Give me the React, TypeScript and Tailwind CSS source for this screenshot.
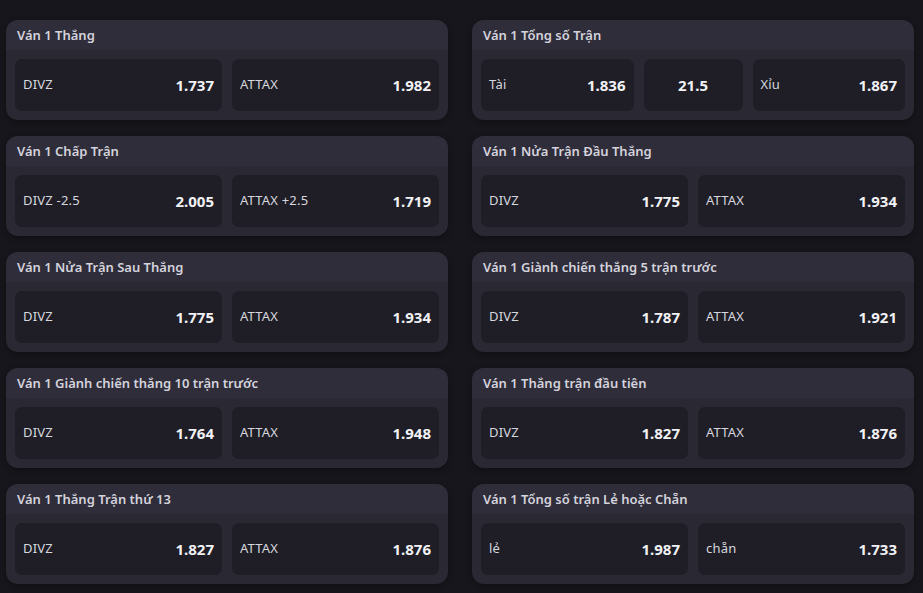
type Cell = { label?: string; odds: string };
type Market = { title: string; cells: Cell[] };

const left: Market[] = [
  { title: 'Ván 1 Thắng', cells: [{ label: 'DIVZ', odds: '1.737' }, { label: 'ATTAX', odds: '1.982' }] },
  { title: 'Ván 1 Chấp Trận', cells: [{ label: 'DIVZ -2.5', odds: '2.005' }, { label: 'ATTAX +2.5', odds: '1.719' }] },
  { title: 'Ván 1 Nửa Trận Sau Thắng', cells: [{ label: 'DIVZ', odds: '1.775' }, { label: 'ATTAX', odds: '1.934' }] },
  { title: 'Ván 1 Giành chiến thắng 10 trận trước', cells: [{ label: 'DIVZ', odds: '1.764' }, { label: 'ATTAX', odds: '1.948' }] },
  { title: 'Ván 1 Thắng Trận thứ 13', cells: [{ label: 'DIVZ', odds: '1.827' }, { label: 'ATTAX', odds: '1.876' }] },
];

const right: Market[] = [
  { title: 'Ván 1 Tổng số Trận', cells: [{ label: 'Tài', odds: '1.836' }, { odds: '21.5' }, { label: 'Xỉu', odds: '1.867' }] },
  { title: 'Ván 1 Nửa Trận Đầu Thắng', cells: [{ label: 'DIVZ', odds: '1.775' }, { label: 'ATTAX', odds: '1.934' }] },
  { title: 'Ván 1 Giành chiến thắng 5 trận trước', cells: [{ label: 'DIVZ', odds: '1.787' }, { label: 'ATTAX', odds: '1.921' }] },
  { title: 'Ván 1 Thắng trận đầu tiên', cells: [{ label: 'DIVZ', odds: '1.827' }, { label: 'ATTAX', odds: '1.876' }] },
  { title: 'Ván 1 Tổng số trận Lẻ hoặc Chẵn', cells: [{ label: 'lẻ', odds: '1.987' }, { label: 'chẵn', odds: '1.733' }] },
];

const MarketCard = ({ market }: { market: Market }) => {
  const three = market.cells.length === 3;
  return (
    <div className="rounded-[12px] bg-[#292833] overflow-hidden shadow-[0_2px_6px_rgba(0,0,0,0.35)]">
      <div className="h-[30px] flex items-center pt-[2px] px-[11px] bg-[#2f2d3a] text-[13px] font-semibold text-[#d4d3dc]">
        {market.title}
      </div>
      <div className={`p-[9px] grid gap-[10px] ${three ? 'grid-cols-[1fr_99px_1fr]' : 'grid-cols-2'}`}>
        {market.cells.map((c, i) => (
          <div
            key={i}
            className={`h-[52px] rounded-[7px] bg-[#1f1e26] flex items-center px-[8px] ${c.label ? 'justify-between' : 'justify-center'}`}
          >
            {c.label && <span className="text-[13px] tracking-[0.2px] text-[#d6d6de]">{c.label}</span>}
            <span className="text-[15px] font-bold text-[#f2f2f6]">{c.odds}</span>
          </div>
        ))}
      </div>
    </div>
  );
};

export default function App() {
  return (
    <div
      className="min-h-screen w-[923px] h-[593px] overflow-hidden bg-[#17161c] pt-[20px] pl-[6px] pr-[9px]"
      style={{ fontFamily: '"Noto Sans", Inter, sans-serif' }}
    >
      <div className="grid grid-cols-2 gap-x-[24px]">
        <div className="flex flex-col gap-[16px]">
          {left.map((m) => (
            <MarketCard key={m.title} market={m} />
          ))}
        </div>
        <div className="flex flex-col gap-[16px]">
          {right.map((m) => (
            <MarketCard key={m.title} market={m} />
          ))}
        </div>
      </div>
    </div>
  );
}
